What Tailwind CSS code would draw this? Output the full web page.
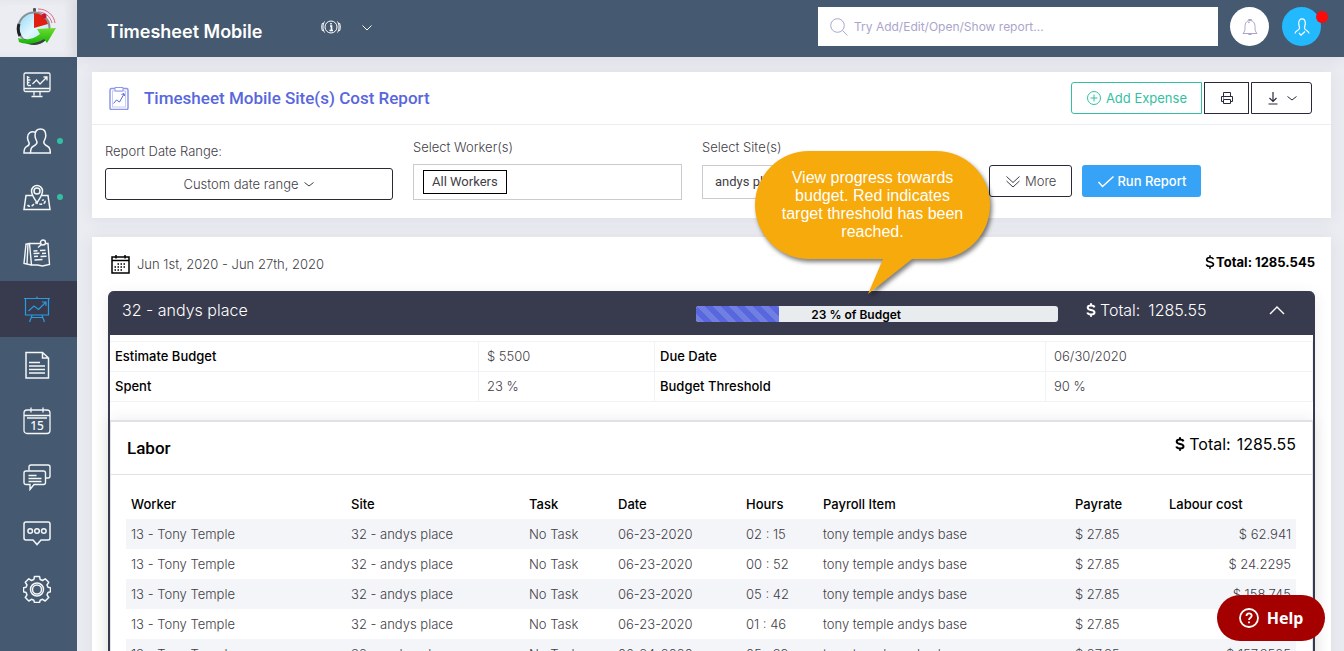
<!DOCTYPE html>
<html lang="en">
<head>
    <meta charset="UTF-8">
    <meta name="viewport" content="width=device-width, initial-scale=1.0">
    <title>Timesheet Mobile - Site(s) Cost Report</title>
    <script src="https://cdn.jsdelivr.net/npm/@tailwindcss/browser@4"></script>
</head>
<body class="relative flex h-screen overflow-hidden bg-[#ebecf2] font-['Inter',sans-serif] text-[13px] leading-5 text-[#3f4047]">

    <!-- Sidebar -->
    <aside class="flex w-[77px] shrink-0 flex-col bg-[#455a71]">
        <a href="#" aria-label="Home" class="flex h-[57px] items-center bg-[#ecedf2] pb-1 pl-4 shadow-[inset_-6px_0_8px_rgba(60,60,80,0.06)]">
            <svg class="h-10 w-10" viewBox="0 0 40 40" fill="none">
                <defs>
                    <linearGradient id="face" x1="0" y1="0" x2="1" y2="1">
                        <stop offset="0" stop-color="#8fd6f5"/><stop offset=".5" stop-color="#e2f7ff"/><stop offset="1" stop-color="#a5def5"/>
                    </linearGradient>
                    <linearGradient id="arrow" x1="0" y1="0" x2="0" y2="1">
                        <stop offset="0" stop-color="#6fdc2c"/><stop offset="1" stop-color="#15b50c"/>
                    </linearGradient>
                </defs>
                <path d="M22 2c9 0 16 6 17 14M22 5c7 0 12 4 14 11M22 8c5 0 9 3 11 7" stroke="#dc6a85" stroke-width="1"/>
                <rect x="17" y="1" width="3" height="4" rx="1" fill="#555"/>
                <circle cx="18" cy="21" r="15.5" fill="url(#face)" stroke="#8b9297" stroke-width="2"/>
                <path d="M3 17a15.500 15.500 0 0 0 1 12" stroke="#222" stroke-width="3"/>
                <path d="M8 33a16 16 0 0 0 21-1" stroke="#3b3f3d" stroke-width="3"/>
                <path d="M18 21V6a15 15 0 0 1 14 11z" fill="#e01f10"/>
                <circle cx="28" cy="9" r="2.500" fill="#c4183c"/>
                <path d="M2 31c8 3 16 1 22-4l-3-5 19-1-9 15-3-4c-8 5-18 6-25 3z" fill="url(#arrow)"/>
            </svg>
        </a>
        <nav class="flex flex-col text-[#f4f6f8]">
            <a href="#" aria-label="Dashboard" class="flex h-14 items-center justify-center pr-[3px]">
                <svg class="size-7" viewBox="0 0 28 28" fill="none" stroke="currentColor" stroke-width="1.300">
                    <rect x="1" y="2" width="26" height="18.500" rx="1.500"/><path d="M1 17.500h26M11 20.500v4M17 20.500v4M8.500 25.500h11"/>
                    <path d="M4.500 5v9.500M4.500 6.500h2M4.500 9h3M4.500 11.500h2M5 14.500h3M9.500 13l4-4 3.500 4 7-7M20.500 6H24v3.500"/>
                </svg>
            </a>
            <a href="#" aria-label="Workers" class="relative flex h-14 items-center justify-center pr-[3px]">
                <svg class="size-7" viewBox="0 0 28 28" fill="none" stroke="currentColor" stroke-width="1.500">
                    <path d="M17.500 2c-4 0-5.500 3-5.500 6.500 0 3 1.500 4.500 2 6.500.3 2-1 3-4 4.500-2 1-2.500 3-2.500 6.500h19.800c0-3.500-.5-5.500-2.500-6.500-3-1.500-4.300-2.500-4-4.500.5-2 2-3.500 2-6.500C22.800 5 21.500 2 17.500 2z"/>
                    <path d="M12.500 5.300C8 3.800 4.500 6 4.500 10.500c0 3 1.300 4 1.700 5.500.3 1.800-.7 2.700-2.700 3.700-2 1-2.500 3-2.500 6.300h6.500"/>
                </svg>
                <span class="absolute top-[25px] left-[57px] size-1.5 rounded-full bg-[#34bfa3]"></span>
            </a>
            <a href="#" aria-label="Sites" class="relative flex h-14 items-center justify-center pr-[3px]">
                <svg class="size-7" viewBox="0 0 28 28" fill="none" stroke="currentColor" stroke-width="1.500">
                    <path d="M14 20c-2-4-5.500-7.500-5.500-12a5.500 5.500 0 0 1 11 0c0 4.500-3.500 8-5.500 12z"/><circle cx="14" cy="8" r="3"/>
                    <path d="M9 12.500H3L1 26.500h26l-2-14h-6"/><path d="M4.500 22c1.500 2.500 5 1 6-.5s3-2.500 5-1 6 .500 6.500-1.500-1.500-2.500-3-1.500" stroke-dasharray="3 1.500"/>
                </svg>
                <span class="absolute top-[25px] left-[57px] size-1.5 rounded-full bg-[#34bfa3]"></span>
            </a>
            <a href="#" aria-label="Notes" class="flex h-14 items-center justify-center pr-[3px]">
                <svg class="size-7" viewBox="0 0 28 28" fill="none" stroke="currentColor" stroke-width="1.400">
                    <path d="M17.500 4.500H6.500l2 21.500h6l5 1 7-1.500L25 4.500h-2.500"/><path d="M6.500 4.500L3 5 1 24.500l7.500 1.500M5 5L4 25"/>
                    <circle cx="20" cy="3.500" r="2.500"/><path d="M18.500 5.500l-3.500 3M10.500 12l4-.3M17 11.500l5.500-.3M10.500 14.500l6-.3M19 14.500l4-.3M11 17.500l4-.3M17.500 17.500l6-.3M11.500 21l8-.5"/>
                </svg>
            </a>
            <a href="#" aria-label="Reports" aria-current="page" class="flex h-14 items-center justify-center bg-[#383a4e] pr-[3px] text-[#2a9be0]">
                <svg class="size-7" viewBox="0 0 28 28" fill="none" stroke="currentColor" stroke-width="1.200">
                    <path d="M1 3.500h26M2.500 3.500v16.500h23V3.500M14 1.500v2M9 20.500L6.500 27M19 20.500l2.500 6.500M8 22.500h12"/>
                    <path d="M5.500 16l5.500-5 4.500 3.500 7.500-7.500M19 7h4v4"/>
                </svg>
            </a>
            <a href="#" aria-label="Documents" class="flex h-14 items-center justify-center pr-[3px]">
                <svg class="size-7" viewBox="0 0 28 28" fill="none" stroke="currentColor" stroke-width="1.500">
                    <path d="M3 1.500h16.500l6 5.500v20H3zM19.500 1.500V7h6"/><path d="M6 11.500h11M6 15h16M6 18.500h16M6 22h16"/>
                </svg>
            </a>
            <a href="#" aria-label="Calendar" class="flex h-14 items-center justify-center pr-[3px]">
                <svg class="size-7" viewBox="0 0 28 28" fill="none" stroke="currentColor" stroke-width="1.300">
                    <rect x="1" y="3" width="26" height="23.500" rx="3"/><path d="M1 8.500h26M4 11h20M8 .5v5M20 .5v5"/>
                    <text x="14" y="23" text-anchor="middle" fill="currentColor" stroke="none" class="font-['Noto_Sans',sans-serif] text-[12px] font-medium">15</text>
                </svg>
            </a>
            <a href="#" aria-label="Conversations" class="flex h-14 items-center justify-center pr-[3px]">
                <svg class="size-7" viewBox="0 0 28 28" fill="none" stroke="currentColor" stroke-width="1.400">
                    <path d="M6 7.500V4a2 2 0 0 1 2-2h17a2 2 0 0 1 2 2v9a2 2 0 0 1-2 2h-2.500"/>
                    <path d="M3 8h17.500a2 2 0 0 1 2 2v9.500a2 2 0 0 1-2 2H11l-4 5v-5H3a2 2 0 0 1-2-2V10a2 2 0 0 1 2-2zM5.500 12.500h8M5.500 15.500h13M5.500 18.500h13"/>
                </svg>
            </a>
            <a href="#" aria-label="Messages" class="flex h-14 items-center justify-center pr-[3px]">
                <svg class="size-7" viewBox="0 0 28 28" fill="none" stroke="currentColor" stroke-width="1.500">
                    <path d="M3 3h22a2 2 0 0 1 2 2v14a2 2 0 0 1-2 2h-7l-4 4.500-4-4.500H3a2 2 0 0 1-2-2V5a2 2 0 0 1 2-2z"/>
                    <circle cx="7.200" cy="12" r="2.300"/><circle cx="14" cy="12" r="2.300"/><circle cx="20.800" cy="12" r="2.300"/>
                </svg>
            </a>
            <a href="#" aria-label="Settings" class="flex h-14 items-center justify-center pr-[3px]">
                <svg class="size-7" viewBox="0 0 28 28" fill="none" stroke="currentColor" stroke-width="1.500" stroke-linejoin="round">
                    <path d="M11.500 1.500h5l.7 3 2.300 1 2.700-1.700 3.500 3.500L24 10l1 2.300 2.500.5v4l-2.500.7-1 2.300 1.700 2.700-3.500 3.500-2.700-1.700-2.300 1-.7 2.200h-5l-.7-2.200-2.300-1L5.800 26l-3.500-3.500L4 19.800l-1-2.300-2.500-.7v-4l2.500-.5L4 10 2.300 7.300l3.500-3.500 2.700 1.700 2.300-1z"/>
                    <circle cx="14" cy="14.500" r="6.500"/><circle cx="14" cy="14.500" r="4.500"/>
                </svg>
            </a>
        </nav>
    </aside>

    <div class="flex min-w-0 flex-1 flex-col">
        <!-- Top bar -->
        <header class="flex h-[57px] shrink-0 items-center bg-[#455a71] pr-[23px] pb-1 pl-[30px] text-white shadow-[0_1px_15px_rgba(69,65,78,0.1)]">
            <span class="pt-2.5 text-lg font-semibold">Timesheet Mobile</span>
            <button type="button" aria-label="Information" class="ml-[59px]">
                <svg class="h-4 w-5" viewBox="0 0 20 16" fill="none" stroke="currentColor">
                    <circle cx="10" cy="8" r="6"/><path d="M9 7h1.500v4M8.500 11.500h3.500M10 4v1.500" stroke-width="1.600"/>
                    <path d="M3.500 2.500c-2 3-2 8 0 11M16.500 2.500c2 3 2 8 0 11M1.500 4c-1 2.500-1 5.500 0 8M18.500 4c1 2.500 1 5.500 0 8"/>
                </svg>
            </button>
            <button type="button" aria-label="Open menu" class="ml-5">
                <svg class="size-3" viewBox="0 0 12 12" fill="none" stroke="currentColor"><path d="M1.500 4.500L6 9l4.500-4.500"/></svg>
            </button>
            <label class="ml-auto flex h-[39px] w-[400px] items-center gap-1.5 bg-white px-3 text-[#aba5cb]">
                <svg class="size-[18px] shrink-0" viewBox="0 0 18 18" fill="none" stroke="currentColor"><circle cx="7.500" cy="7.500" r="6.800"/><path d="M12.500 12.500l5 5"/></svg>
                <input type="text" aria-label="Search" placeholder="Try Add/Edit/Open/Show report..." class="min-w-0 flex-1 text-xs outline-none placeholder:text-[#aba5cb]">
            </label>
            <button type="button" aria-label="Notifications" class="ml-3 flex size-[39px] items-center justify-center rounded-full bg-white text-[#aba5cb]">
                <svg class="size-[18px]" viewBox="0 0 18 18" fill="none" stroke="currentColor"><path d="M2 15.500c2-2 2-4 2-7C4 5 6 2.500 9 2.500S14 5 14 8.500c0 3 0 5 2 7zM7.500 2.500v-1h3v1M6.500 15.500c1 1.500 4 1.500 5 0M7 5c.5-.6 1.200-.9 2-1"/></svg>
            </button>
            <button type="button" aria-label="Profile" class="relative ml-[13px] flex size-[39px] items-center justify-center rounded-full bg-[#22b9ff]">
                <svg class="size-[18px]" viewBox="0 0 18 18" fill="none" stroke="currentColor" stroke-width="1.200"><path d="M2 15.500c0-3 4.500-3 4.500-5.500 0-1.500-.8-3-.8-4.500C5.700 2.500 7 .8 9 .8s3.300 1.700 3.300 4.700c0 1.500-.8 3-.8 4.500 0 2.500 4.500 2.500 4.500 5.500M6 15l2 2.200 4-3.700"/></svg>
                <span class="absolute -right-[7px] top-1 size-3 rounded-full bg-[#ff0a0a]"></span>
            </button>
        </header>

        <main class="flex flex-1 flex-col gap-[19px] pt-[15px] pr-[13px] pl-[15px]">
            <!-- Filters -->
            <section class="bg-white shadow-[0_1px_15px_rgba(69,65,78,0.08)]">
                <div class="flex h-[53px] items-center border-b border-[#ebedf2] pr-[19px] pl-[17px]">
                    <svg class="h-6 w-5 text-[#8d97ec]" viewBox="0 0 20 24" fill="none" stroke="currentColor">
                        <rect x="1" y="2.500" width="18" height="21" rx="1.500" stroke-width="1.500"/><rect x="3.500" y="5" width="13" height="16" stroke-opacity=".5"/>
                        <path d="M6 1.500h8v3.500H6z" fill="#fff"/><path d="M4.500 17.500l3-3.500 3 2 4.500-8M12.500 8.500L15 7.500l.5 2.500" stroke="#5867dd"/>
                    </svg>
                    <h1 class="ml-[15px] font-['Roboto',sans-serif] text-[17px] font-medium text-[#5867dd]">Timesheet Mobile Site(s) Cost Report</h1>
                    <div class="ml-auto flex gap-0.5 text-[#282a3c]">
                        <button type="button" class="flex h-8 items-center gap-1 rounded-l-[3px] border border-[#34bfa3] px-3.5 text-[#34bfa3]">
                            <svg class="size-4" viewBox="0 0 16 16" fill="none" stroke="currentColor"><circle cx="8" cy="8" r="6.500"/><path d="M8 4.500v7M4.500 8h7"/></svg>
                            Add Expense
                        </button>
                        <button type="button" aria-label="Print" class="flex h-8 w-[45px] items-center justify-center border border-[#282a3c]">
                            <svg class="size-3.5" viewBox="0 0 14 14" fill="none" stroke="currentColor"><path d="M3.500 5.500v-4h7v4M3.500 10.500h-2v-5h11v5h-2M3.500 8.500h7v4h-7zM3 7h1"/></svg>
                        </button>
                        <button type="button" aria-label="Download" class="flex h-8 w-[61px] items-center justify-center gap-1.5 rounded-r-[3px] border border-[#282a3c]">
                            <svg class="size-3.5" viewBox="0 0 14 14" fill="none" stroke="currentColor" stroke-width="1.200"><path d="M7 1v9M3.500 7L7 10.500 10.500 7M2.500 13h9"/></svg>
                            <svg class="size-3" viewBox="0 0 12 12" fill="none" stroke="currentColor"><path d="M1.500 4.500L6 8l4.500-3.500"/></svg>
                        </button>
                    </div>
                </div>
                <div class="flex items-end gap-5 px-[13px] pt-3 pb-[18px] font-light">
                    <div class="flex w-72 flex-col gap-[7px]">
                        <span id="rangeLabel">Report Date Range:</span>
                        <button type="button" aria-describedby="rangeLabel" class="flex h-8 items-center justify-center gap-1 rounded-[3px] border border-[#282a3c]">
                            Custom date range
                            <svg class="size-3" viewBox="0 0 12 12" fill="none" stroke="currentColor"><path d="M1.500 4.500L6 8l4.500-3.500"/></svg>
                        </button>
                    </div>
                    <div class="flex w-[269px] flex-col gap-[7px]">
                        <label for="workers">Select Worker(s)</label>
                        <div class="flex h-9 items-center border border-[#c9cbd1] px-[9px] font-['Roboto',sans-serif] font-normal">
                            <span class="border border-black px-2 leading-[22px]">All Workers</span>
                            <input id="workers" type="text" class="min-w-0 flex-1 outline-none">
                        </div>
                    </div>
                    <div class="flex w-[267px] flex-col gap-2">
                        <label for="sites">Select Site(s)</label>
                        <select id="sites" class="mb-px h-[34px] appearance-none border border-[#c9cbd1] px-3 font-['Roboto',sans-serif] font-normal">
                            <option>andys place</option>
                        </select>
                    </div>
                    <div class="mb-[3px] flex gap-2.5">
                        <button type="button" class="flex h-8 items-center gap-1 rounded-[3px] border border-[#282a3c] px-[15px]">
                            <svg class="size-4" viewBox="0 0 16 16" fill="none" stroke="currentColor"><path d="M1.500 3.500L8 9.500l6.500-6M1.500 8L8 14l6.500-6"/></svg>
                            More
                        </button>
                        <button type="button" class="flex h-8 items-center gap-0.5 rounded-[3px] bg-[#36a3f7] px-[15px] font-medium text-white">
                            <svg class="h-4 w-[18px]" viewBox="0 0 18 16" fill="none" stroke="currentColor" stroke-width="1.500"><path d="M1.500 9l4 4.500L16.500 3.500"/></svg>
                            Run Report
                        </button>
                    </div>
                </div>
            </section>

            <!-- Report -->
            <section class="flex-1 bg-white px-4 shadow-[0_1px_15px_rgba(69,65,78,0.08)]">
                <div class="flex h-[54px] items-center justify-between">
                    <p class="flex items-center gap-[7px] pl-[3px] font-light">
                        <svg class="size-[19px]" viewBox="0 0 19 19" fill="none" stroke="#000">
                            <path d="M1 2h17v16H1z" stroke-width="1.500"/><path d="M1 5.500h17M5 0v3.500M14 0v3.500" stroke-width="1.500"/>
                            <path d="M6.500 9h9M3.500 12h12M3.500 15h9" stroke-width="1.500" stroke-dasharray="1.500 1.500"/>
                        </svg>
                        Jun 1st, 2020 - Jun 27th, 2020
                    </p>
                    <p class="flex items-center gap-px pb-1 font-bold text-black">
                        <svg class="h-3.5 w-2.5" viewBox="0 0 10 14" fill="none" stroke="currentColor" stroke-width="1.600"><path d="M8.500 4.300C8 3 6.500 2.500 5 2.500c-2 0-3.300.9-3.300 2.300C1.700 8 8.500 6 8.500 9.300c0 1.400-1.500 2.200-3.500 2.200-1.800 0-3.200-.7-3.700-2M5 .3v2.200M5 11.500v2.200"/></svg>
                        Total: 1285.545
                    </p>
                </div>

                <div class="rounded-t-md border-x-2 border-[#383a4e] shadow-[0_4px_15px_rgba(69,65,78,0.1)]">
                    <div class="flex h-11 items-center rounded-t bg-[#383a4e] pr-7 pl-3 text-base text-white">
                        <h2 class="flex-1 pb-1.5 font-light">32 - andys place</h2>
                        <div class="mt-0.5 flex h-4 w-[362px] overflow-hidden rounded-[3px] bg-[#e9ecef]" role="progressbar" aria-valuenow="23" aria-valuemin="0" aria-valuemax="100">
                            <div class="bg-[#5867dd] bg-[linear-gradient(45deg,rgba(255,255,255,0.15)_25%,transparent_25%,transparent_50%,rgba(255,255,255,0.15)_50%,rgba(255,255,255,0.15)_75%,transparent_75%)] bg-[length:16px_16px]" style="width: 23%"></div>
                            <span class="pl-8 text-xs leading-[17px] font-semibold text-black">23 % of Budget</span>
                        </div>
                        <p class="ml-7 flex w-[183px] items-center gap-1 pb-1.5 font-light">
                            <svg class="h-4 w-2.5" viewBox="0 0 10 14" fill="none" stroke="currentColor" stroke-width="2"><path d="M8.500 4.300C8 3 6.500 2.500 5 2.500c-2 0-3.300.9-3.300 2.300C1.700 8 8.500 6 8.500 9.300c0 1.400-1.500 2.200-3.500 2.200-1.800 0-3.200-.7-3.700-2M5 .3v2.200M5 11.500v2.200"/></svg>
                            Total: <span class="ml-1">1285.55</span>
                        </p>
                        <button type="button" aria-label="Collapse" class="pb-1.5">
                            <svg class="size-4" viewBox="0 0 16 16" fill="none" stroke="currentColor" stroke-width="1.400"><path d="M1 12l7-7 7 7"/></svg>
                        </button>
                    </div>

                    <table class="mt-1.5 w-full table-fixed border-collapse text-left [&_td]:h-[30px] [&_td]:border [&_td]:border-[#f1f2f6] [&_td]:px-2 [&_td]:pb-0.5 [&_td]:font-light [&_th]:border-y [&_th]:border-[#f1f2f6] [&_th]:px-[5px] [&_th]:pb-0.5 [&_th]:font-medium [&_th]:text-black">
                        <colgroup><col><col class="w-44"><col class="w-[391px]"><col class="w-[267px]"></colgroup>
                        <tbody>
                            <tr><th scope="row">Estimate Budget</th><td>$ 5500</td><th scope="row">Due Date</th><td>06/30/2020</td></tr>
                            <tr><th scope="row">Spent</th><td>23 %</td><th scope="row">Budget Threshold</th><td>90 %</td></tr>
                        </tbody>
                    </table>

                    <div class="mt-[18px] border-x border-[#dfe1e6] shadow-[0_1px_15px_rgba(69,65,78,0.12)]">
                        <div class="flex h-[55px] items-center justify-between border-t-2 border-b border-[#dfe1e6] px-4 text-black">
                            <h3 class="font-['Roboto',sans-serif] text-[17px] font-medium">Labor</h3>
                            <p class="flex items-center gap-1 pb-2 text-base">
                                <svg class="h-3.5 w-2.5" viewBox="0 0 10 14" fill="none" stroke="currentColor" stroke-width="2"><path d="M8.500 4.300C8 3 6.500 2.500 5 2.500c-2 0-3.300.9-3.300 2.300C1.700 8 8.500 6 8.500 9.300c0 1.400-1.500 2.200-3.500 2.200-1.800 0-3.200-.7-3.700-2M5 .3v2.200M5 11.500v2.200"/></svg>
                                Total: <span class="ml-0.5">1285.55</span>
                            </p>
                        </div>
                        <div class="bg-white pt-3.5 pr-4 pl-[15px]">
                            <table class="w-full table-fixed text-left whitespace-nowrap">
                                <colgroup>
                                    <col class="w-[220px]"><col class="w-[178px]"><col class="w-[89px]"><col class="w-32">
                                    <col class="w-[77px]"><col><col class="w-[94px]"><col class="w-[132px]">
                                </colgroup>
                                <thead>
                                    <tr class="h-[30px] text-black [&>th]:px-[5px] [&>th]:font-medium">
                                        <th>Worker</th><th>Site</th><th>Task</th><th>Date</th><th>Hours</th><th>Payroll Item</th><th>Payrate</th><th>Labour cost</th>
                                    </tr>
                                </thead>
                                <tbody id="laborRows" class="font-light"></tbody>
                            </table>
                        </div>
                    </div>
                </div>
            </section>
        </main>
    </div>

    <!-- Budget hint -->
    <div class="absolute top-[151px] left-[755px] h-[142px] w-[235px]">
        <svg class="absolute inset-0 overflow-visible drop-shadow-[2px_3px_2px_rgba(0,0,0,0.5)]" width="235" height="142" viewBox="0 0 235 142">
            <path d="M54 0h127a54 54 0 0 1 0 108h-24l-44 35 15-35H54A54 54 0 0 1 54 0z" fill="#f7aa0b"/>
        </svg>
        <p class="relative px-6 pt-[18px] text-center font-['Liberation_Sans',sans-serif] text-base leading-[18px] text-white">View progress towards budget. Red indicates target threshold has been reached.</p>
    </div>

    <!-- Help -->
    <button type="button" class="absolute right-[19px] bottom-2.5 flex h-[46px] w-[108px] items-center justify-center gap-2 rounded-full bg-[#a50000] font-['Noto_Sans',sans-serif] text-base font-bold text-white">
        <svg class="size-5" viewBox="0 0 20 20" fill="none" stroke="currentColor" stroke-width="1.800"><circle cx="10" cy="10" r="9"/><path d="M7.500 8c0-3.500 5.200-3.300 5.200-.3 0 2-2.700 2-2.700 4.300M10 13.500v1.800"/></svg>
        Help
    </button>

    <script>
        const entries = [
            { date: "06-23-2020", hours: "02 : 15", cost: "$ 62.941" },
            { date: "06-23-2020", hours: "00 : 52", cost: "$ 24.2295" },
            { date: "06-23-2020", hours: "05 : 42", cost: "$ 158.745" },
            { date: "06-23-2020", hours: "01 : 46", cost: "$ 49.2945" },
            { date: "06-24-2020", hours: "05 : 39", cost: "$ 157.3525" }
        ];

        document.getElementById('laborRows').innerHTML = entries.map(entry => `
            <tr class="h-[30px] odd:bg-[#f4f5f8] [&>td]:px-[5px]">
                <td>13 - Tony Temple</td>
                <td>32 - andys place</td>
                <td>No Task</td>
                <td>${entry.date}</td>
                <td>${entry.hours}</td>
                <td>tony temple andys base</td>
                <td>$ 27.85</td>
                <td class="text-right">${entry.cost}</td>
            </tr>
        `).join('');
    </script>
</body>
</html>
